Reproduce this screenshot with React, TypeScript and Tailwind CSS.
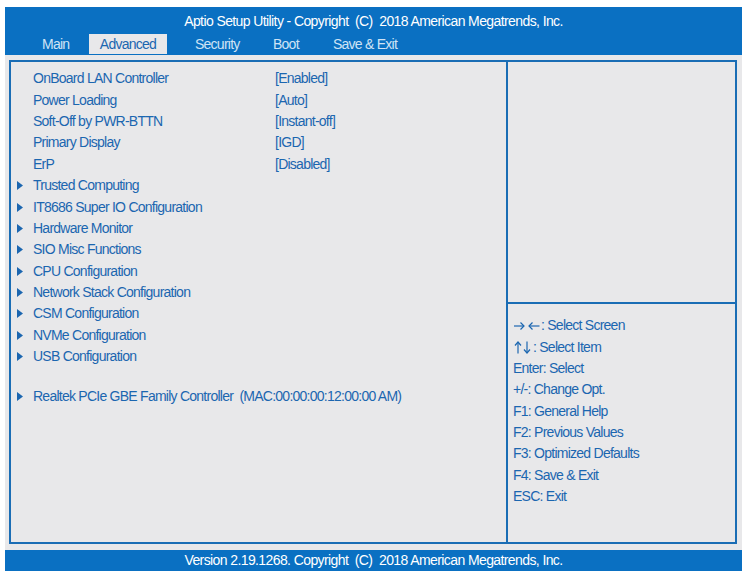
import React from 'react';

const settings = [
  { label: 'OnBoard LAN Controller', value: '[Enabled]' },
  { label: 'Power Loading', value: '[Auto]' },
  { label: 'Soft-Off by PWR-BTTN', value: '[Instant-off]' },
  { label: 'Primary Display', value: '[IGD]' },
  { label: 'ErP', value: '[Disabled]' },
];

const submenus = [
  'Trusted Computing',
  'IT8686 Super IO Configuration',
  'Hardware Monitor',
  'SIO Misc Functions',
  'CPU Configuration',
  'Network Stack Configuration',
  'CSM Configuration',
  'NVMe Configuration',
  'USB Configuration',
];

const help = [
  'Enter: Select',
  '+/-: Change Opt.',
  'F1: General Help',
  'F2: Previous Values',
  'F3: Optimized Defaults',
  'F4: Save & Exit',
  'ESC: Exit',
];

const tabs = [
  { name: 'Main', cls: 'w-[47px]' },
  { name: 'Advanced', cls: 'w-[78px] justify-center bg-[#e8e8ea] text-[#1b66b0]' },
  { name: 'Security', cls: 'w-[106px] pl-[28px]' },
  { name: 'Boot', cls: 'w-[60px]' },
  { name: 'Save & Exit', cls: 'w-[80px]' },
];

const blue = '#1b66b0';

function Arrow() {
  return (
    <svg width="6" height="9" viewBox="0 0 6 9" className="ml-[1px] mr-[10px] shrink-0">
      <path d="M0 0 L6 4.5 L0 9 Z" fill={blue} />
    </svg>
  );
}

function HArrows() {
  return (
    <svg width="26" height="10" viewBox="0 0 26 10" className="ml-[1px] mr-[1px] shrink-0">
      <g stroke={blue} strokeWidth="1.2" fill="none">
        <path d="M0 5 H10" />
        <path d="M6.5 1.5 L10 5 L6.5 8.5" />
        <path d="M15 5 H25.5" />
        <path d="M18.5 1.5 L15 5 L18.5 8.5" />
      </g>
    </svg>
  );
}

function VArrows() {
  return (
    <svg width="18" height="13" viewBox="0 0 18 13" className="ml-[1px] mr-[1px] shrink-0">
      <g stroke={blue} strokeWidth="1.2" fill="none">
        <path d="M4 1 V12.5" />
        <path d="M1 4.5 L4 1 L7 4.5" />
        <path d="M13 0.5 V12" />
        <path d="M10 8.5 L13 12 L16 8.5" />
      </g>
    </svg>
  );
}

function App() {
  return (
    <div
      className="w-[747px] h-[574px] bg-white px-[5px] pt-[7px] overflow-hidden text-[14px] tracking-[-0.75px]"
      style={{ fontFamily: '"Liberation Sans", Arial, sans-serif' }}
    >
      <header className="bg-[#0a70c2] h-[48px] flex flex-col">
        <div className="h-[27px] flex items-center justify-center text-white pt-[1px] tracking-[-0.6px]">
          Aptio Setup Utility - Copyright&nbsp; (C)&nbsp; 2018 American Megatrends, Inc.
        </div>
        <div className="h-[20px] flex items-stretch pl-[37px] text-[#cfe3f5]">
          {tabs.map((t) => (
            <div key={t.name} className={'flex items-center ' + t.cls}>
              {t.name}
            </div>
          ))}
        </div>
      </header>

      <div className="bg-[#e8e8ea] h-[495px] pt-[5px] pl-[4px] pr-[5px] pb-[6px]">
        <div className="h-full border-2 border-[#1a6db5] flex text-[#1b66b0]">
          <div className="w-[495px] pt-[6px] pl-[5px]">
            {settings.map((s) => (
              <div key={s.label} className="h-[21.4px] flex items-center">
                <span className="w-[259px] pl-[17px]">{s.label}</span>
                <span>{s.value}</span>
              </div>
            ))}
            {submenus.map((s) => (
              <div key={s} className="h-[21.4px] flex items-center">
                <Arrow />
                <span>{s}</span>
              </div>
            ))}
            <div className="h-[18.5px]" />
            <div className="h-[21.4px] flex items-center">
              <Arrow />
              <span>Realtek PCIe GBE Family Controller&nbsp; (MAC:00:00:00:12:00:00 AM)</span>
            </div>
          </div>
          <div className="flex-1 border-l-2 border-[#1a6db5] flex flex-col">
            <div className="h-[242px] border-b-2 border-[#1a6db5]" />
            <div className="pt-[11px] pl-[5px]">
              <div className="h-[21.35px] flex items-center">
                <HArrows />
                <span>: Select Screen</span>
              </div>
              <div className="h-[21.35px] flex items-center">
                <VArrows />
                <span>: Select Item</span>
              </div>
              {help.map((h) => (
                <div key={h} className="h-[21.35px] flex items-center">
                  {h}
                </div>
              ))}
            </div>
          </div>
        </div>
      </div>

      <footer className="bg-[#0a70c2] h-[21px] flex items-center justify-center text-white tracking-[-0.6px]">
        Version 2.19.1268. Copyright&nbsp; (C)&nbsp; 2018 American Megatrends, Inc.
      </footer>
    </div>
  );
}

export default App;
